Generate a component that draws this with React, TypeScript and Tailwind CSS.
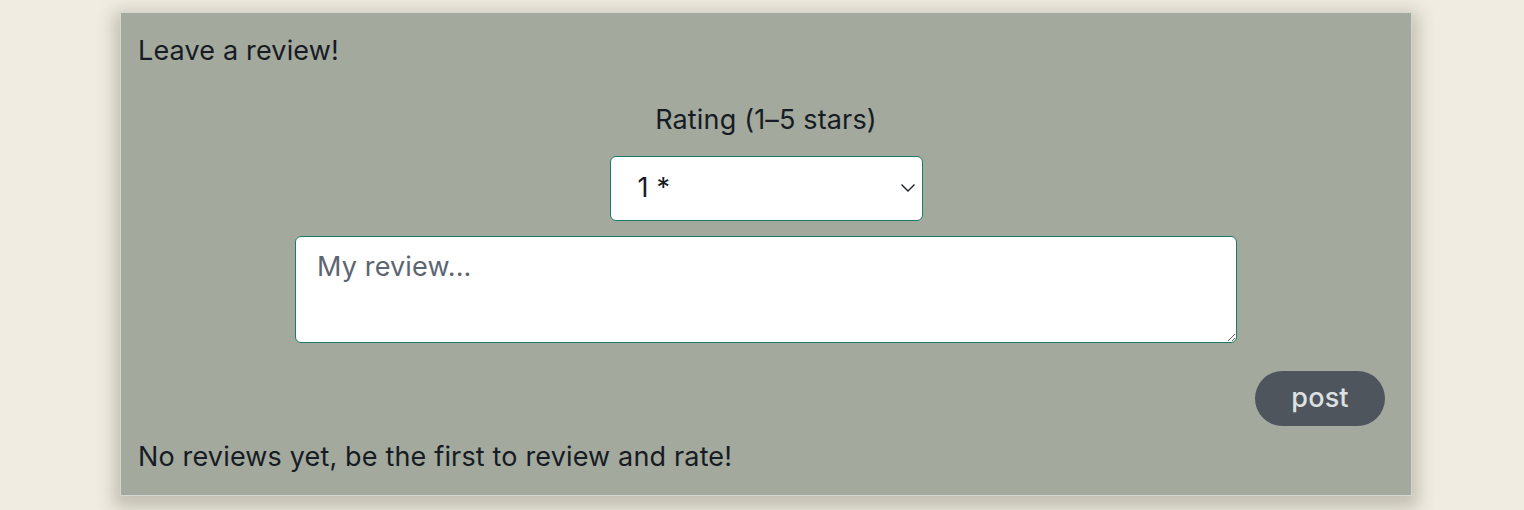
import React from "react";

export default function App() {
  return (
    <div className="min-h-[510px] w-full bg-[#f0ece1] pt-[12px]" style={{ fontFamily: "Inter, 'Noto Sans', sans-serif" }}>
      <div className="ml-[120px] w-[1292px] border border-[#d4d6d2] bg-[#a3a99d] px-[17px] pb-[21px] pt-[21px] tracking-[0.01em] text-[#161b24] shadow-[0_6px_16px_6px_rgba(60,55,40,0.25)]">
        <h2 className="text-[27px] leading-[34px]">Leave a review!</h2>
        <div className="mt-[35px] flex flex-col items-center">
          <label className="text-[27px] leading-[34px]">Rating (1–5 stars)</label>
          <div className="relative mt-[19px]">
            <select className="h-[65px] w-[313px] appearance-none rounded-[6px] border-[1.5px] border-[#1b7a68] bg-white pl-[27px] pr-[40px] text-[27px] text-[#161b24]">
              <option>1 *</option>
              <option>2 *</option>
              <option>3 *</option>
              <option>4 *</option>
              <option>5 *</option>
            </select>
            <svg className="pointer-events-none absolute right-[7px] top-[27px]" width="16" height="10" viewBox="0 0 16 10" fill="none">
              <path d="M1.5 1.5 L8 8 L14.5 1.5" stroke="#1a1f29" strokeWidth="1.4" />
            </svg>
          </div>
          <textarea
            placeholder="My review..."
            className="mt-[15px] h-[107px] w-[942px] rounded-[6px] border-[1.5px] border-[#1b7a68] bg-white px-[21px] py-[13px] text-[27px] leading-[34px] placeholder:text-[#5c6570]"
          />
        </div>
        <div className="mt-[28px] flex justify-end pr-[9px]">
          <button className="h-[55px] w-[130px] rounded-full bg-[#4f555c] text-[27px] font-medium text-[#dde1e3]">post</button>
        </div>
        <p className="mt-[14px] text-[27px] leading-[34px]">No reviews yet, be the first to review and rate!</p>
      </div>
    </div>
  );
}
